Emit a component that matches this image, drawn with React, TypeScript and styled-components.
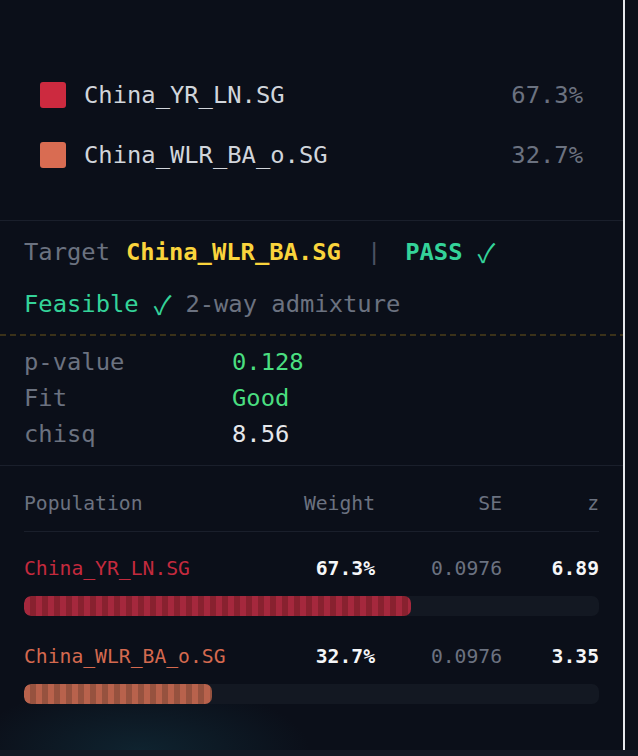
import React from "react";
import styled, { createGlobalStyle } from "styled-components";

const GlobalStyle = createGlobalStyle`
  html, body { margin: 0; padding: 0; background: #0b0f19; }
  body { font-family: "DejaVu Sans Mono", "Liberation Mono", monospace; }
  * { box-sizing: border-box; }
`;

const MONO = `"DejaVu Sans Mono", "Liberation Mono", monospace`;

const Page = styled.div`
  width: 638px;
  height: 756px;
  display: flex;
  flex-direction: column;
  background: #0b0f19;
  overflow: hidden;
`;

const Panel = styled.div`
  width: 625px;
  height: 750px;
  border-right: 2px solid #e6e8ec;
  background:
    radial-gradient(ellipse 170px 70px at 140px 752px, rgba(18, 52, 66, 0.55), rgba(11, 15, 25, 0) 100%),
    #0b0f19;
  font-family: ${MONO};
  display: flex;
  flex-direction: column;
`;

const Footer = styled.div`
  height: 6px;
  background: #121824;
`;

const Legend = styled.div`
  padding: 80px 40px 50px;
  border-bottom: 1px solid #1a1f2b;
  display: flex;
  flex-direction: column;
  gap: 30px;
`;

const LegendRow = styled.div`
  display: flex;
  align-items: center;
  height: 30px;
`;

const Swatch = styled.span<{ $color: string }>`
  width: 26px;
  height: 26px;
  border-radius: 3px;
  background: ${(p) => p.$color};
  margin-right: 18px;
  flex: none;
`;

const LegendName = styled.span`
  flex: 1;
  font-size: 23.8px;
  color: #d1d5db;
`;

const LegendPct = styled.span`
  font-size: 23.8px;
  color: #6b7280;
`;

const Info = styled.div`
  padding: 15px 24px 14px;
  display: flex;
  flex-direction: column;
  gap: 20px;
`;

const InfoLine = styled.div`
  display: flex;
  align-items: center;
  height: 32px;
  font-size: 23.8px;
  white-space: pre;
`;

const Muted = styled.span`
  color: #6b7280;
`;

const TargetName = styled.span`
  color: #fad43c;
  font-weight: 700;
  margin-left: 16px;
`;

const Sep = styled.span`
  color: #4b5263;
  margin: 0 24px 0 26px;
`;

const Pass = styled.span`
  color: #34d399;
  font-weight: 700;
`;

const Green = styled.span`
  color: #34d399;
`;

const Check = styled.span`
  color: #34d399;
  font-family: "Noto Sans CJK JP", "DejaVu Sans", sans-serif;
  font-weight: 400;
  font-size: 26px;
  line-height: 1;
  margin: 0 14px 0 15px;
`;

const DashedRule = styled.div`
  height: 2px;
  background: repeating-linear-gradient(90deg, #3b3219 0 6px, transparent 6px 10px);
`;

const Stats = styled.div`
  padding: 8px 24px 13px;
  display: grid;
  grid-template-columns: 208px 1fr;
  grid-auto-rows: 36px;
  align-items: center;
  font-size: 23.8px;
  border-bottom: 1px solid #1a1f2b;
`;

const StatLabel = styled.span`
  color: #6b7280;
`;

const StatValue = styled.span<{ $tone: "good" | "plain" }>`
  color: ${(p) => (p.$tone === "good" ? "#4ade80" : "#e5e7eb")};
`;

const Table = styled.div`
  padding: 22px 24px 0;
  display: flex;
  flex-direction: column;
`;

const Cols = styled.div`
  display: grid;
  grid-template-columns: 1fr 119px 127px 97px;
  align-items: center;
  font-size: 19.7px;
`;

const HeadRow = styled(Cols)`
  height: 30px;
  margin-bottom: 13px;
  color: #6b7280;
`;

const HeadRule = styled.div`
  height: 1px;
  background: #1a1f2b;
  margin-bottom: 22px;
`;

const Cell = styled.span<{ $align?: "left" | "right" }>`
  text-align: ${(p) => p.$align ?? "left"};
`;

const PopBlock = styled.div`
  display: flex;
  flex-direction: column;
  gap: 14px;
  margin-bottom: 26px;
`;

const DataRow = styled(Cols)`
  height: 28px;
`;

const PopName = styled.span<{ $color: string }>`
  color: ${(p) => p.$color};
`;

const Strong = styled.span`
  text-align: right;
  color: #f5f6f8;
  font-weight: 700;
`;

const Dim = styled.span`
  text-align: right;
  color: #6b7280;
`;

const Track = styled.div`
  height: 20px;
  border-radius: 7px;
  background: #131822;
  overflow: hidden;
`;

const Fill = styled.div<{ $light: string; $dark: string }>`
  height: 100%;
  border-radius: 7px;
  background: repeating-linear-gradient(
    90deg,
    ${(p) => p.$light} 0 6px,
    ${(p) => p.$dark} 6px 12px
  );
`;

const legend = [
  { name: "China_YR_LN.SG", pct: "67.3%", color: "#cc2a3f" },
  { name: "China_WLR_BA_o.SG", pct: "32.7%", color: "#d96c52" },
];

const pops = [
  {
    name: "China_YR_LN.SG",
    weight: 67.3,
    se: "0.0976",
    z: "6.89",
    color: "#c42a3e",
    light: "#a5283d",
    dark: "#88212f",
  },
  {
    name: "China_WLR_BA_o.SG",
    weight: 32.7,
    se: "0.0976",
    z: "3.35",
    color: "#d4694f",
    light: "#b8624c",
    dark: "#96523f",
  },
];

export default function App() {
  return (
    <>
      <GlobalStyle />
      <Page>
        <Panel>
          <Legend>
            {legend.map((l) => (
              <LegendRow key={l.name}>
                <Swatch $color={l.color} />
                <LegendName>{l.name}</LegendName>
                <LegendPct>{l.pct}</LegendPct>
              </LegendRow>
            ))}
          </Legend>

          <Info>
            <InfoLine>
              <Muted>Target</Muted>
              <TargetName>China_WLR_BA.SG</TargetName>
              <Sep>|</Sep>
              <Pass>PASS</Pass>
              <Check>✓</Check>
            </InfoLine>
            <InfoLine>
              <Green>Feasible</Green>
              <Check>✓</Check>
              <Muted>2-way admixture</Muted>
            </InfoLine>
          </Info>

          <DashedRule />

          <Stats>
            <StatLabel>p-value</StatLabel>
            <StatValue $tone="good">0.128</StatValue>
            <StatLabel>Fit</StatLabel>
            <StatValue $tone="good">Good</StatValue>
            <StatLabel>chisq</StatLabel>
            <StatValue $tone="plain">8.56</StatValue>
          </Stats>

          <Table>
            <HeadRow>
              <Cell>Population</Cell>
              <Cell $align="right">Weight</Cell>
              <Cell $align="right">SE</Cell>
              <Cell $align="right">z</Cell>
            </HeadRow>
            <HeadRule />
            {pops.map((p) => (
              <PopBlock key={p.name}>
                <DataRow>
                  <PopName $color={p.color}>{p.name}</PopName>
                  <Strong>{p.weight.toFixed(1)}%</Strong>
                  <Dim>{p.se}</Dim>
                  <Strong>{p.z}</Strong>
                </DataRow>
                <Track>
                  <Fill $light={p.light} $dark={p.dark} style={{ width: `${p.weight}%` }} />
                </Track>
              </PopBlock>
            ))}
          </Table>
        </Panel>
        <Footer />
      </Page>
    </>
  );
}
